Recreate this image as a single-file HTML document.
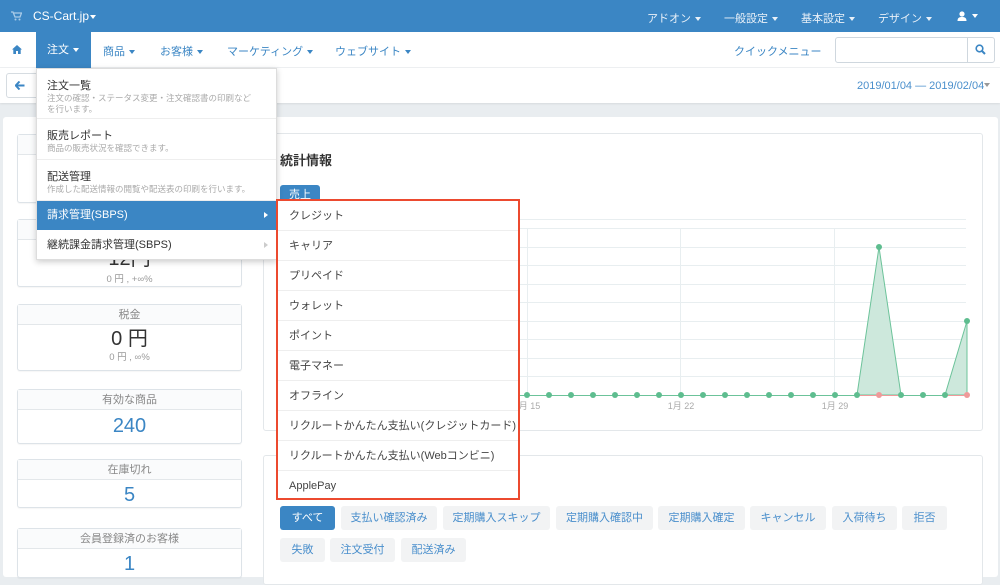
<!DOCTYPE html>
<html><head><meta charset="utf-8"><style>
*{box-sizing:border-box;margin:0;padding:0}
body{width:1000px;height:572px;overflow:hidden;background:#e9edf0;font-family:"Liberation Sans","Noto Sans CJK JP",sans-serif;font-size:11px;color:#333;position:relative}
.a{position:absolute}
.top{left:0;top:0;width:1000px;height:32px;background:#3b86c4;color:#fff}
.nav{left:0;top:32px;width:1000px;height:36px;background:#fff;border-bottom:1px solid #eef0f2}
.tool{left:0;top:68px;width:1000px;height:35px;background:#fff;box-shadow:0 1px 2px rgba(0,0,0,.08)}
.car{display:inline-block;width:0;height:0;border-left:3.5px solid transparent;border-right:3.5px solid transparent;border-top:4px solid currentColor;vertical-align:middle;margin-left:4px}
.box{border:1px solid #dde3e8;border-radius:3px;background:#fff;text-align:center;box-shadow:0 1px 1px rgba(0,0,0,.04)}
.box .h{height:20px;border-bottom:1px solid #e3e7ea;background:#fafbfc;color:#888;font-size:11px;line-height:20px}
.num{color:#3b86c4;font-size:20px}
.dd{background:#fff;box-shadow:0 2px 6px rgba(0,0,0,.2);border:1px solid #ddd}
.it{position:absolute;left:0;width:100%;border-bottom:1px solid #eee;padding-left:10px}
.it b{font-weight:normal;font-size:11px;color:#333;display:block}
.it i{font-style:normal;font-size:8.5px;color:#aaa;display:block;line-height:11px}
.sub div{height:30px;line-height:30px;border-bottom:1px solid #eee;padding-left:11px;font-size:11px;color:#444}
.btn{position:absolute;height:24px;line-height:24px;background:#f2f3f4;border-radius:3px;color:#4a8fcc;font-size:11px;text-align:center}
</style></head><body>
<div class="a top">
 <svg class="a" style="left:11px;top:11px" width="11" height="10" viewBox="0 0 11 10"><path d="M0 1h2l2 5h5l1.5-4H3" fill="none" stroke="#a9cbe8" stroke-width="1.3"/><circle cx="4.5" cy="8.5" r="1" fill="#a9cbe8"/><circle cx="8.5" cy="8.5" r="1" fill="#a9cbe8"/></svg>
 <span class="a" style="left:33px;top:9px;font-size:12px">CS-Cart.jp<span class="car" style="margin-left:1px"></span></span>
 <span class="a" style="left:647px;top:10px;font-size:11px;color:#e8f0f8">アドオン<span class="car"></span></span>
 <span class="a" style="left:724px;top:10px;font-size:11px;color:#e8f0f8">一般設定<span class="car"></span></span>
 <span class="a" style="left:801px;top:10px;font-size:11px;color:#e8f0f8">基本設定<span class="car"></span></span>
 <span class="a" style="left:878px;top:10px;font-size:11px;color:#e8f0f8">デザイン<span class="car"></span></span>
 <svg class="a" style="left:957px;top:11px" width="10" height="10" viewBox="0 0 10 10"><circle cx="5" cy="3" r="2.6" fill="#fff"/><path d="M0.5 10C0.5 6.5 2.5 6 5 6s4.5.5 4.5 4z" fill="#fff"/></svg>
 <span class="a" style="left:968px;top:10px;color:#fff"><span class="car"></span></span>
</div>
<div class="a nav">
 <svg class="a" style="left:12px;top:13px" width="10" height="9" viewBox="0 0 10 9"><path d="M5 0L0 4.5h1.3V9h2.7V6h2v3h2.7V4.5H10z" fill="#3b86c4"/></svg>
 <div class="a" style="left:36px;top:0;width:55px;height:36px;background:#3b86c4;color:#fff;line-height:36px;padding-left:11px">注文<span class="car"></span></div>
 <span class="a" style="left:103px;top:11px;color:#3b86c4">商品<span class="car"></span></span>
 <span class="a" style="left:160px;top:11px;color:#3b86c4">お客様<span class="car"></span></span>
 <span class="a" style="left:227px;top:11px;color:#3b86c4">マーケティング<span class="car"></span></span>
 <span class="a" style="left:335px;top:11px;color:#3b86c4">ウェブサイト<span class="car"></span></span>
 <span class="a" style="left:734px;top:11px;color:#3b86c4">クイックメニュー</span>
 <div class="a" style="left:835px;top:5px;width:160px;height:26px;border:1px solid #cfd7de;border-radius:3px"></div>
 <div class="a" style="left:967px;top:5px;width:1px;height:26px;background:#cfd7de"></div>
 <svg class="a" style="left:975px;top:12px" width="11" height="11" viewBox="0 0 11 11"><circle cx="4.5" cy="4.5" r="3.3" fill="none" stroke="#3b86c4" stroke-width="1.6"/><path d="M7 7l3 3" stroke="#3b86c4" stroke-width="2"/></svg>
</div>
<div class="a tool">
 <div class="a" style="left:6px;top:5px;width:40px;height:25px;border:1px solid #d6dce1;border-radius:3px"></div>
 <svg class="a" style="left:15px;top:13px" width="10" height="9" viewBox="0 0 10 9"><path d="M4.5 0.5L0.8 4.5l3.7 4M1 4.5h8.5" fill="none" stroke="#3b86c4" stroke-width="2"/></svg>
 <span class="a" style="left:857px;top:12px;color:#4a8fcc">2019/01/04 — 2019/02/04</span>
 <span class="a" style="left:984px;top:11px;color:#999"><span class="car" style="margin:0"></span></span>
</div>
<div class="a" style="left:3px;top:117px;width:995px;height:460px;background:#fff;border-radius:3px"></div>
<!-- left stats -->
<div class="a box" style="left:17px;top:134px;width:225px;height:69px"><div class="h"></div></div>
<div class="a box" style="left:17px;top:219px;width:225px;height:68px"><div class="h"></div><div style="font-size:20px;margin-top:2px;color:#333">12円</div><div style="color:#999;font-size:9.5px">0 円 , +∞%</div></div>
<div class="a box" style="left:17px;top:304px;width:225px;height:67px"><div class="h">税金</div><div style="font-size:20px;line-height:28px;color:#333">0 円</div><div style="color:#999;font-size:9.5px;line-height:10px">0 円 , ∞%</div></div>
<div class="a box" style="left:17px;top:389px;width:225px;height:55px"><div class="h">有効な商品</div><div class="num" style="line-height:32px">240</div></div>
<div class="a box" style="left:17px;top:459px;width:225px;height:49px"><div class="h">在庫切れ</div><div class="num" style="line-height:30px">5</div></div>
<div class="a box" style="left:17px;top:528px;width:225px;height:50px"><div class="h">会員登録済のお客様</div><div class="num" style="line-height:30px">1</div></div>
<!-- chart panel -->
<div class="a" style="left:263px;top:133px;width:720px;height:298px;border:1px solid #e3e7ea;border-radius:3px;background:#fff"></div>
<div class="a" style="left:280px;top:150px;font-size:13px;font-weight:bold;color:#333">統計情報</div>
<div class="a" style="left:280px;top:185px;width:40px;height:20px;background:#3b86c4;border-radius:3px;color:#fff;text-align:center;line-height:20px">売上</div>
<svg class="a" style="left:0;top:0" width="1000" height="440">
 <g stroke="#e8eef0" stroke-width="1">
  <line x1="280" y1="219.5" x2="966" y2="219.5"/><line x1="280" y1="228.5" x2="966" y2="228.5"/><line x1="280" y1="247.5" x2="966" y2="247.5"/><line x1="280" y1="265.5" x2="966" y2="265.5"/><line x1="280" y1="284.5" x2="966" y2="284.5"/><line x1="280" y1="302.5" x2="966" y2="302.5"/><line x1="280" y1="321.5" x2="966" y2="321.5"/><line x1="280" y1="339.5" x2="966" y2="339.5"/><line x1="280" y1="358.5" x2="966" y2="358.5"/><line x1="280" y1="376.5" x2="966" y2="376.5"/>
  <line x1="527.5" y1="228" x2="527.5" y2="395"/><line x1="680.5" y1="228" x2="680.5" y2="395"/><line x1="834.5" y1="228" x2="834.5" y2="395"/>
 </g>
 <path d="M857 395L879 247L901 395ZM945 395L967 321L967 395Z" fill="#cde8dc" stroke="#6cc39a" stroke-width="1"/>
 <line x1="857" y1="395.5" x2="967" y2="395.5" stroke="#ef9a9a"/>
 <line x1="280" y1="395.5" x2="857" y2="395.5" stroke="#6cc39a"/>
 <line x1="901" y1="395.5" x2="945" y2="395.5" stroke="#6cc39a"/>
 <g fill="#5ebd8f">
  <circle cx="527" cy="395" r="3"/><circle cx="549" cy="395" r="3"/><circle cx="571" cy="395" r="3"/><circle cx="593" cy="395" r="3"/><circle cx="615" cy="395" r="3"/><circle cx="637" cy="395" r="3"/><circle cx="659" cy="395" r="3"/><circle cx="681" cy="395" r="3"/><circle cx="703" cy="395" r="3"/><circle cx="725" cy="395" r="3"/><circle cx="747" cy="395" r="3"/><circle cx="769" cy="395" r="3"/><circle cx="791" cy="395" r="3"/><circle cx="813" cy="395" r="3"/><circle cx="835" cy="395" r="3"/><circle cx="857" cy="395" r="3"/><circle cx="879" cy="247" r="3"/><circle cx="901" cy="395" r="3"/><circle cx="923" cy="395" r="3"/><circle cx="945" cy="395" r="3"/><circle cx="967" cy="321" r="3"/>
 </g>
 <circle cx="879" cy="395" r="3" fill="#ef9a9a"/><circle cx="967" cy="395" r="3" fill="#ef9a9a"/>
 <g fill="#aaa" font-size="9" font-family="Liberation Sans,Noto Sans CJK JP,sans-serif" text-anchor="middle">
  <text x="527" y="409">1月 15</text><text x="681" y="409">1月 22</text><text x="835" y="409">1月 29</text>
 </g>
</svg>
<!-- second panel -->
<div class="a" style="left:263px;top:455px;width:720px;height:130px;border:1px solid #e3e7ea;border-radius:3px;background:#fff"></div>
<div class="btn" style="left:280px;top:506px;width:55px;background:#3b86c4;color:#fff">すべて</div>
<div class="btn" style="left:341px;top:506px;width:96px">支払い確認済み</div>
<div class="btn" style="left:443px;top:506px;width:107px">定期購入スキップ</div>
<div class="btn" style="left:556px;top:506px;width:97px">定期購入確認中</div>
<div class="btn" style="left:658px;top:506px;width:87px">定期購入確定</div>
<div class="btn" style="left:750px;top:506px;width:76px">キャンセル</div>
<div class="btn" style="left:832px;top:506px;width:65px">入荷待ち</div>
<div class="btn" style="left:902px;top:506px;width:45px">拒否</div>
<div class="btn" style="left:280px;top:538px;width:45px">失敗</div>
<div class="btn" style="left:330px;top:538px;width:65px">注文受付</div>
<div class="btn" style="left:401px;top:538px;width:65px">配送済み</div>
<!-- dropdown -->
<div class="a dd" style="left:36px;top:68px;width:241px;height:192px">
 <div class="it" style="top:0;height:50px;padding-top:8px"><b>注文一覧</b><i>注文の確認・ステータス変更・注文確認書の印刷など<br>を行います。</i></div>
 <div class="it" style="top:50px;height:41px;padding-top:8px"><b>販売レポート</b><i>商品の販売状況を確認できます。</i></div>
 <div class="it" style="top:91px;height:41px;padding-top:8px"><b>配送管理</b><i>作成した配送情報の閲覧や配送表の印刷を行います。</i></div>
 <div class="it" style="top:132px;height:29px;background:#3b86c4;color:#fff;line-height:29px;border:0">請求管理(SBPS)<span class="a" style="right:8px;top:11px;border-left:4px solid #fff;border-top:3.5px solid transparent;border-bottom:3.5px solid transparent"></span></div>
 <div class="it" style="top:161px;height:30px;line-height:30px;border:0;color:#333">継続課金請求管理(SBPS)<span class="a" style="right:8px;top:12px;border-left:4px solid #ccc;border-top:3.5px solid transparent;border-bottom:3.5px solid transparent"></span></div>
</div>
<!-- submenu -->
<div class="a sub" style="left:276px;top:199px;width:244px;height:301px;border:2px solid #ec4a2f;background:#fff">
 <div>クレジット</div><div>キャリア</div><div>プリペイド</div><div>ウォレット</div><div>ポイント</div><div>電子マネー</div><div>オフライン</div><div>リクルートかんたん支払い(クレジットカード)</div><div>リクルートかんたん支払い(Webコンビニ)</div><div style="border:0">ApplePay</div>
</div>
</body></html>
